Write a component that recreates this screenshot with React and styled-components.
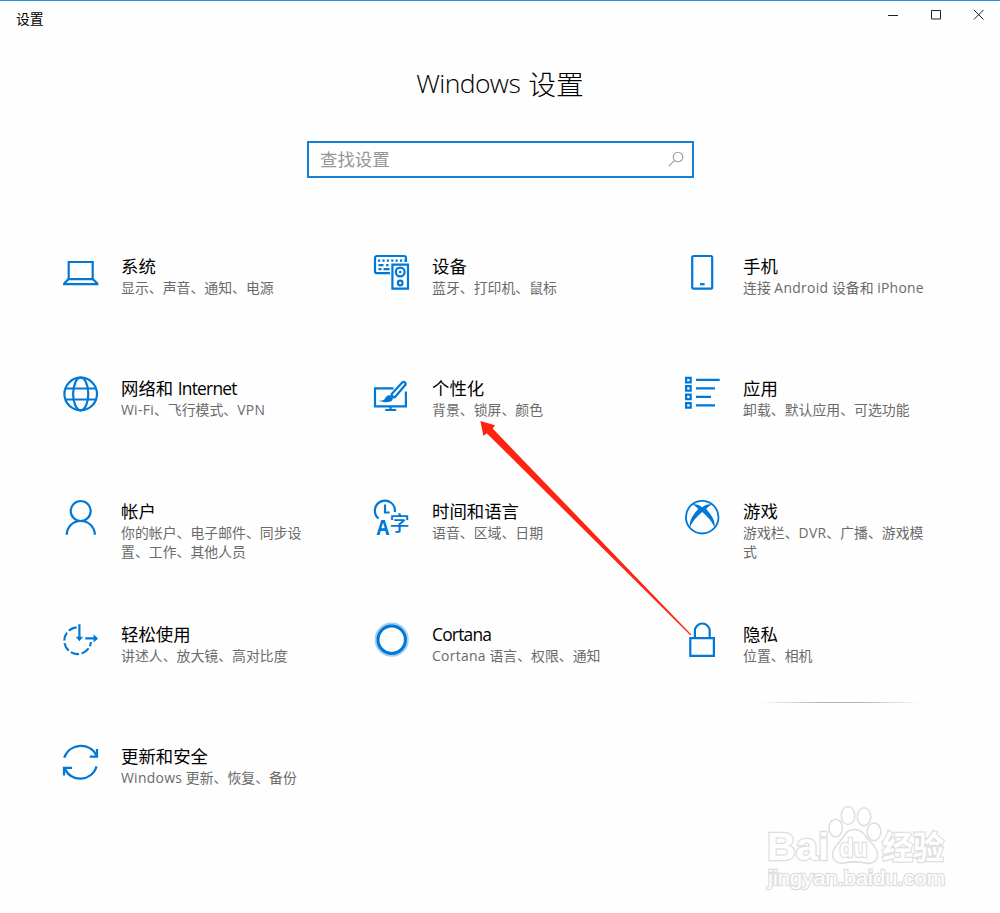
import * as React from "react";
import styled, { createGlobalStyle } from "styled-components";

const BLUE = "#0078d7";

const GlobalStyle = createGlobalStyle`
  * {
    box-sizing: border-box;
  }
  body {
    margin: 0;
    background: #fefefe;
    font-family: "Open Sans", "Noto Sans CJK SC", sans-serif;
  }
`;

//icons, all of them on a 36px grid
const LaptopIcon = () => (
  <Icon viewBox="0 0 36 36">
    <path d="M5.7 24.5V7h24v17.5" />
    <path d="M5.5 24.2h24.4l4.4 4.2v.8H1.2v-.8z" />
  </Icon>
);
const DevicesIcon = () => (
  <Icon viewBox="0 0 36 36">
    <path d="M16 18.2H3a2 2 0 0 1-2-2V3a2 2 0 0 1 2-2h27a2 2 0 0 1 2 2v4" />
    <path d="M4 5.7h27" strokeDasharray="2.2 2.2" />
    <path d="M4.5 10.2h5M12 10.2h2.5M4.5 14.2h3M9.5 14.2h6" />
    <path d="M18.4 9.7h15.6v24H18.4z" />
    <circle cx="26.2" cy="17" r="4.4" />
    <circle cx="26.2" cy="17" r="1.3" fill={BLUE} stroke="none" />
    <circle cx="26.2" cy="28" r="2.3" />
  </Icon>
);
const PhoneIcon = () => (
  <Icon viewBox="0 0 36 36">
    <rect x="7.2" y="1" width="20" height="32.6" rx="1.4" />
    <path d="M15 29.2h4.6" />
  </Icon>
);
const GlobeIcon = () => (
  <Icon viewBox="0 0 36 36">
    <circle cx="17.7" cy="17" r="16.3" />
    <ellipse cx="17.7" cy="17" rx="7.6" ry="16.3" />
    <path d="M2.4 11.5h30.6M2.4 22.5h30.6" />
  </Icon>
);
const BrushIcon = () => (
  <Icon viewBox="0 0 36 36">
    <path d="M19.5 11.3H1v18h30.9V14.5M16.6 29.3v4M11.2 33h11" />
    <path d="M17 17.7 28.2 5.6c2-1.8 4.6.5 2.8 2.7L20.2 21" />
    <path d="m17 17.7 3.3 3.2" />
    <path
      d="M4.6 23.6c4.5.3 5.7-.6 7.2-3.4 1.4-2.5 4.2-2.6 5.9-1 1.9 1.9 1.3 4.4-1.1 5.3-3.2 1.2-8 1.2-12-.9z"
      fill={BLUE}
      stroke="none"
    />
  </Icon>
);
const AppsIcon = () => (
  <Icon viewBox="0 0 36 36">
    <path d="M1.1.9h4.6v4.4H1.1zM1.1 9.2h4.6v4.4H1.1zM1.1 17.7h4.6v4.4H1.1zM1.1 26.2h4.6v4.4H1.1z" />
    <path d="M11 2.9h23.7M11 11.4h19M11 19.9h15M11 28.4h19" />
  </Icon>
);
const AccountIcon = () => (
  <Icon viewBox="0 0 36 36">
    <circle cx="17.7" cy="11" r="10" />
    <path d="M3.7 34.8C4 27 9.5 21 17.7 21S31.6 27 31.9 34.8" />
  </Icon>
);
const LanguageIcon = () => (
  <Icon viewBox="0 0 36 36">
    <path d="M4.7 18.5A10 10 0 1 1 20.8 12" />
    <path d="M11 4.5v8h4.6" />
    <IconText x="2.6" y="34.6" $size={20.5} $latin textLength="12.8" lengthAdjust="spacingAndGlyphs">
      A
    </IconText>
    <IconText x="15.4" y="31" $size={20}>
      字
    </IconText>
  </Icon>
);
const XboxIcon = () => (
  <Icon viewBox="0 0 36 36">
    <circle cx="17.2" cy="17.2" r="16.3" strokeWidth="1.8" />
    <path
      d="M7.2 4.7c3.2-1.2 6.9.4 10 2.5 3.1-2.1 6.8-3.7 10-2.5-2.3.4-4.2 2.1-6 4.4 4.5 4.9 9.8 12.2 8.2 18.4-1.8-5.5-7-11.3-12.2-15.6C12 16.2 6.8 22 5 27.5 3.4 21.3 8.7 14 13.2 9.1c-1.8-2.3-3.7-4-6-4.4z"
      fill={BLUE}
      stroke="none"
    />
  </Icon>
);
const EaseIcon = () => (
  <Icon viewBox="0 0 36 36">
    <path d="M13.6 4.3A13.4 13.4 0 1 0 28 19" strokeDasharray="8.6 2.6" />
    <path d="M16.4 1.3v15.5M22.3 15.4h11.5" />
    <path d="M12.7 13.8h7.4L16.4 18.2zM30.6 11.3v8.2l4.4-4.1z" fill={BLUE} stroke="none" />
  </Icon>
);
const CortanaIcon = () => (
  <Icon viewBox="0 0 36 36">
    <circle cx="17.7" cy="16.7" r="15.8" stroke="#a5cff0" strokeWidth="2.6" />
    <circle cx="17.7" cy="16.7" r="13.7" strokeWidth="3" />
  </Icon>
);
const LockIcon = () => (
  <Icon viewBox="0 0 36 36">
    <path d="M5.3 15.2h23.6v17.6H5.3z" />
    <path d="M9.9 15V7.9a7.4 7.4 0 0 1 14.8 0V15" />
  </Icon>
);
const UpdateIcon = () => (
  <Icon viewBox="0 0 36 36">
    <path d="M1.2 12.7C6.5-2.3 27.5-3.3 33.8 11" />
    <path d="M34 4v7.7h-7.3" />
    <path d="M33.6 21.3C28.5 37.3 7.5 37.3 1.7 23.5" />
    <path d="M1 30.5v-7.6h8" />
  </Icon>
);

const items = [
  { title: "系统", text: "显示、声音、通知、电源", icon: LaptopIcon },
  { title: "设备", text: "蓝牙、打印机、鼠标", icon: DevicesIcon },
  { title: "手机", text: "连接 Android 设备和 iPhone", icon: PhoneIcon },
  { title: "网络和 Internet", text: "Wi-Fi、飞行模式、VPN", icon: GlobeIcon },
  { title: "个性化", text: "背景、锁屏、颜色", icon: BrushIcon },
  { title: "应用", text: "卸载、默认应用、可选功能", icon: AppsIcon },
  { title: "帐户", text: "你的帐户、电子邮件、同步设置、工作、其他人员", icon: AccountIcon },
  { title: "时间和语言", text: "语音、区域、日期", icon: LanguageIcon },
  { title: "游戏", text: "游戏栏、DVR、广播、游戏模式", icon: XboxIcon },
  { title: "轻松使用", text: "讲述人、放大镜、高对比度", icon: EaseIcon },
  { title: "Cortana", text: "Cortana 语言、权限、通知", icon: CortanaIcon },
  { title: "隐私", text: "位置、相机", icon: LockIcon },
  { title: "更新和安全", text: "Windows 更新、恢复、备份", icon: UpdateIcon },
];

//latin words get their own tracking beside the chinese text
const Mixed = ({ children, tracking }) =>
  children.split(/([A-Za-z-]+)/).map((part, i) =>
    i % 2 ? (
      <Latin key={i} $tracking={tracking}>
        {part}
      </Latin>
    ) : (
      part
    )
  );

const Watermark = () => (
  <Mark viewBox="0 0 200 100">
    <MarkText x="7" y="60" $size={39} $bold textLength="62" lengthAdjust="spacingAndGlyphs">
      Bai
    </MarkText>
    <ellipse cx="75.7" cy="28" rx="6.8" ry="8.8" />
    <ellipse cx="88" cy="15.5" rx="6.8" ry="9" />
    <ellipse cx="104" cy="16.7" rx="6.8" ry="9" />
    <ellipse cx="114" cy="31.7" rx="6.8" ry="8.8" />
    <path d="M94.5 29.5c6 0 9 3 12 8 3 4.5 11 9 11 17 0 7-6 10-12 8.5-7-1.5-14-1.5-21 0-6 1.5-12-2-12-9 0-7 7-11 10.5-16.5 3-5 5.5-8 11.5-8z" />
    <MarkText x="79.5" y="57" $size={25} $bold textLength="28" lengthAdjust="spacingAndGlyphs">
      du
    </MarkText>
    <MarkText x="122" y="58.5" $size={32} $bold textLength="62" lengthAdjust="spacingAndGlyphs">
      经验
    </MarkText>
    <MarkText x="8" y="85" $size={21} textLength="177" lengthAdjust="spacingAndGlyphs">
      jingyan.baidu.com
    </MarkText>
  </Mark>
);

export default function App() {
  return (
    <Window>
      <GlobalStyle />
      <TitleBar>
        <AppName>设置</AppName>
        <Controls>
          <ControlIcon viewBox="0 0 11 11">
            <path d="M1 6.5h10" />
          </ControlIcon>
          <ControlIcon viewBox="0 0 11 11">
            <path d="M1.5 1.5h9v8.5h-9z" />
          </ControlIcon>
          <ControlIcon viewBox="0 0 11 11">
            <path d="m.9.9 9.6 9.6M10.500.9.9 10.500" />
          </ControlIcon>
        </Controls>
      </TitleBar>
      <Heading>
        <HeadingLatin>Windows</HeadingLatin>设置
      </Heading>
      <SearchBox>
        <Placeholder>查找设置</Placeholder>
        <SearchIcon viewBox="0 0 16 16">
          <circle cx="10" cy="6" r="4.8" />
          <path d="M6.6 9.4.8 15.2" />
        </SearchIcon>
      </SearchBox>
      <Grid>
        {items.map(({ title, text, icon: ItemIcon }) => (
          <Item key={title}>
            <ItemIcon />
            <Label>
              <Title>
                <Mixed tracking="-0.045em">{title}</Mixed>
              </Title>
              <Text>
                <Mixed tracking="0.022em">{text}</Mixed>
              </Text>
            </Label>
          </Item>
        ))}
      </Grid>
      <Shade />
      <Arrow viewBox="0 0 220 220">
        <path d="M.4 1 15 5.3 12.7 8.6 211.3 214.4 210.3 215.2 6.7 13.2 3.4 16z" />
      </Arrow>
      <Watermark />
    </Window>
  );
}

const Window = styled.main`
  position: relative;
  width: 1000px;
  height: 913px;
  overflow: hidden;
  border-top: 1px solid #2f8fd8;
  background: #fefefe;
  color: #000;
`;
const TitleBar = styled.header`
  display: flex;
  justify-content: space-between;
  height: 60px;
  padding: 8px 16px 0;
`;
const AppName = styled.div`
  font-size: 13.8px;
  line-height: 20px;
`;
const Controls = styled.div`
  display: flex;
  gap: 32px;
`;
const ControlIcon = styled.svg`
  width: 11px;
  height: 11px;
  fill: none;
  stroke: #222;
`;
const Heading = styled.h1`
  display: flex;
  justify-content: center;
  gap: 8px;
  margin: 0;
  height: 80px;
  font-size: 27.8px;
  font-weight: 300;
  line-height: 46px;
`;
const HeadingLatin = styled.span`
  font-size: 26.5px;
  letter-spacing: -0.6px;
  line-height: 45px;
`;
const SearchBox = styled.div`
  display: flex;
  align-items: center;
  justify-content: space-between;
  width: 387px;
  height: 37px;
  margin: 0 0 0 307px;
  padding: 0 8px 0 11px;
  border: 2px solid #1580d5;
  background: #fff;
  color: #959595;
`;
const Placeholder = styled.span`
  padding-bottom: 2px;
  font-size: 17.4px;
  line-height: 24px;
`;
const SearchIcon = styled.svg`
  width: 16px;
  height: 16px;
  margin-bottom: 1px;
  fill: none;
  stroke: #999;
  stroke-width: 1.1;
`;
const Grid = styled.section`
  display: grid;
  grid-template-columns: repeat(3, 311px);
  grid-template-rows: 122px 123px 123px 122px 100px;
  padding: 77px 0 0 63px;
`;
const Item = styled.article`
  display: flex;
  align-items: flex-start;
  gap: 22px;
`;
const Icon = styled.svg`
  flex: none;
  width: 36px;
  height: 36px;
  overflow: visible;
  fill: none;
  stroke: ${BLUE};
  stroke-width: 2.2;
`;
const IconText = styled.text`
  fill: ${BLUE};
  stroke: none;
  font-family: ${(props) => (props.$latin ? '"Open Sans"' : '"Noto Sans CJK SC"')}, sans-serif;
  font-size: ${(props) => props.$size}px;
  font-weight: ${(props) => (props.$latin ? 700 : 500)};
`;
const Label = styled.div`
  margin-top: -1px;
`;
const Title = styled.h2`
  margin: 0;
  font-size: 17.4px;
  font-weight: 400;
  line-height: 24px;
  white-space: nowrap;
`;
const Text = styled.p`
  width: 187px;
  margin: 0;
  color: #6a6a6a;
  font-size: 13.88px;
  line-height: 19px;
`;
const Latin = styled.span`
  letter-spacing: ${(props) => props.$tracking};
`;
const Shade = styled.div`
  position: absolute;
  left: 760px;
  top: 701px;
  width: 162px;
  height: 1px;
  background: linear-gradient(90deg, transparent, #b0b0b0 40%, #b0b0b0 60%, transparent);
`;
const Arrow = styled.svg`
  position: absolute;
  left: 480px;
  top: 419px;
  width: 220px;
  height: 220px;
  fill: #ff2412;
`;
const Mark = styled.svg`
  position: absolute;
  left: 760px;
  top: 799px;
  width: 200px;
  height: 100px;
  fill: #fff;
  stroke: #dedede;
  stroke-width: 1.5;
`;
const MarkText = styled.text`
  font-family: "Liberation Sans", "Noto Sans CJK SC", sans-serif;
  font-size: ${(props) => props.$size}px;
  font-weight: ${(props) => (props.$bold ? 700 : 400)};
  paint-order: stroke;
  stroke-width: 2.5;
`;
